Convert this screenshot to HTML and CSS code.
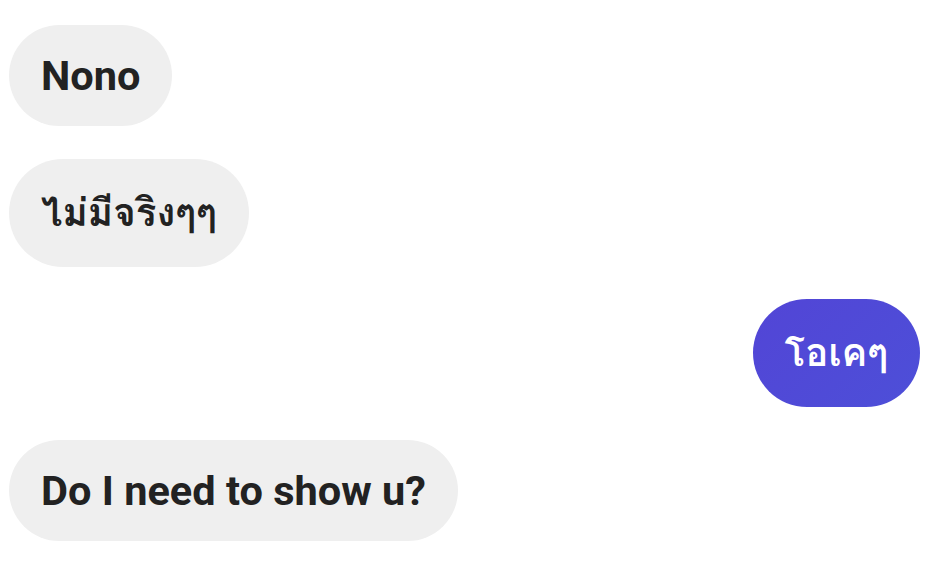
FILE: index.html
```html
<!DOCTYPE html>
<html lang="th">
<head>
<meta charset="utf-8">
<link rel="stylesheet" href="styles.css">
</head>
<body>
<div class="chat">
  <div class="msg in">Nono</div>
  <div class="msg in th">ไม่มีจริงๆๆ</div>
  <div class="msg out th">โอเคๆ</div>
  <div class="msg in">Do I need to show u?</div>
</div>
</body>
</html>
```

FILE: styles.css
```css
html, body {
  margin: 0;
  background: #ffffff;
}
.chat {
  display: flex;
  flex-direction: column;
  gap: 32.5px;
  padding: 25px 21px 0 9px;
  font-family: Roboto, "Loma", "Noto Sans Thai", sans-serif;
  font-weight: 700;
  font-size: 41.5px;
}
.msg {
  padding: 27px 32px;
  border-radius: 60px;
  line-height: 47px;
}
.th {
  font-family: "Loma", "Noto Sans Thai", sans-serif;
  font-size: 38.5px;
  line-height: 54px;
}
.in {
  align-self: flex-start;
  background: #efefef;
  color: #222222;
}
.out {
  align-self: flex-end;
  background: linear-gradient(135deg, #5245d6, #4d4fd8);
  color: #ffffff;
}
```
